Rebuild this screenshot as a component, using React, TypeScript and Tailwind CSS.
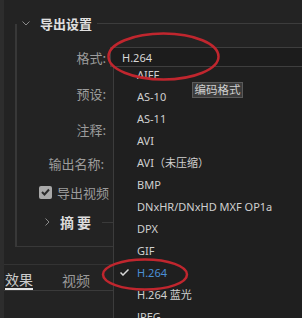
export default function App() {
  const items = [
    "AIFF",
    "AS-10",
    "AS-11",
    "AVI",
    "AVI（未压缩）",
    "BMP",
    "DNxHR/DNxHD MXF OP1a",
    "DPX",
    "GIF",
    "H.264",
    "H.264 蓝光",
    "JPEG",
  ];
  return (
    <div className="relative w-[302px] h-[318px] overflow-hidden bg-[#232323] flex font-['Noto_Sans_CJK_SC',sans-serif]">
      <div className="w-[4px] shrink-0 bg-[#2d2d2d]" />
      <div className="flex-1 flex flex-col min-w-0">
        {/* header */}
        <div className="mt-[17px] h-[12px] flex items-center relative z-[1]">
          <svg className="ml-[18px] w-[8px] h-[5px]" viewBox="0 0 8 5">
            <polyline points="0.5,0.5 4,4 7.5,0.5" fill="none" stroke="#8a8a8a" strokeWidth="1" />
          </svg>
          <span className="ml-[10px] text-[13px] font-bold text-[#e0e0e0] leading-none whitespace-nowrap">导出设置</span>
          <div className="ml-[5px] flex-1 h-px bg-[#3c3c3c]" />
        </div>
        {/* group box */}
        <div className="-mt-[5px] ml-[11px] h-[223px] border-l-2 border-b border-[#383838] flex flex-col text-[13px] text-[#9c9c9c]">
          <div className="mt-[23px] h-[20px] flex items-center">
            <span className="w-[89px] text-right leading-none">格式:</span>
            <div className="ml-[4px] flex-1 h-[20px] -mr-[2px] border border-r-0 border-[#3e3e3e] bg-[#1c1c1c] flex items-center pl-[11px] relative z-20">
              <span className="text-[11px] text-[#d8d8d8] font-['Noto_Sans',sans-serif] leading-none">H.264</span>
            </div>
          </div>
          <div className="mt-[16px] h-[20px] flex items-center">
            <span className="w-[89px] text-right leading-none">预设:</span>
          </div>
          <div className="mt-[16px] h-[20px] flex items-center">
            <span className="w-[89px] text-right leading-none">注释:</span>
          </div>
          <div className="mt-[14px] h-[20px] flex items-center">
            <span className="w-[87px] text-right leading-none whitespace-nowrap">输出名称:</span>
          </div>
          <div className="mt-[11px] h-[16px] flex items-center">
            <div className="ml-[22px] w-[13px] h-[13px] rounded-[2px] bg-[#a9a9a9] flex items-center justify-center">
              <svg className="w-[9px] h-[8px]" viewBox="0 0 9 8">
                <polyline points="1,4 3.5,6.5 8,1.5" fill="none" stroke="#2b2b2b" strokeWidth="2" />
              </svg>
            </div>
            <span className="ml-[5px] leading-none whitespace-nowrap">导出视频</span>
          </div>
          <div className="mt-[14px] h-[16px] flex items-center">
            <svg className="ml-[28px] w-[5px] h-[8px]" viewBox="0 0 5 8">
              <polyline points="0.5,0.5 4,4 0.5,7.5" fill="none" stroke="#8a8a8a" strokeWidth="1" />
            </svg>
            <span className="ml-[10px] font-bold text-[14px] tracking-[3px] text-[#dcdcdc] leading-none whitespace-nowrap">摘要</span>
            <div className="ml-[8px] flex-1 h-px bg-[#3a3a3a]" />
          </div>
        </div>
        {/* tabs */}
        <div className="mt-[17px] h-px bg-[#333333]" />
        <div className="h-[25px] flex text-[14px]">
          <div className="ml-[1px] border-b-2 border-[#e6e6e6] text-[#cccccc] flex items-center pt-[4px] leading-none">效果</div>
          <div className="ml-[29px] text-[#9a9a9a] flex items-center pt-[4px] leading-none">视频</div>
        </div>
        <div className="h-px bg-[#3a3a3a]" />
      </div>

      {/* dropdown list */}
      <div className="absolute left-[113px] top-[63px] w-[200px] h-[270px] bg-[#1f1f1f] border-l border-[#3c3c3c] z-10 font-['Noto_Sans','Noto_Sans_CJK_SC',sans-serif] text-[11px]">
        {items.map((it, i) => (
          <div key={i} className="relative h-[22px] flex items-center pl-[23px] whitespace-nowrap">
            {i === 9 && (
              <svg className="absolute left-[6px] top-[8px] w-[9px] h-[7px]" viewBox="0 0 9 7">
                <polyline points="0.5,3.5 3,6 8.5,0.5" fill="none" stroke="#d8d8d8" strokeWidth="1.5" />
              </svg>
            )}
            <span className={i === 9 ? "text-[#4a8fd6] leading-none" : "text-[#d0d0d0] leading-none"}>{it}</span>
          </div>
        ))}
      </div>

      {/* tooltip */}
      <div className="absolute left-[192px] top-[82px] w-[51px] h-[16px] bg-[#3b3b3b] border border-[#5a5a5a] z-30 flex items-center justify-center text-[11.5px] text-[#cfcfcf] leading-none whitespace-nowrap">
        编码格式
      </div>

      {/* annotations */}
      <svg className="absolute left-0 top-0 w-[302px] h-[318px] z-40 pointer-events-none" viewBox="0 0 302 318">
        <ellipse cx="163.5" cy="56.5" rx="55" ry="23" fill="none" stroke="#c0262e" strokeWidth="2.5" />
        <ellipse cx="145" cy="274.5" rx="42" ry="15" fill="none" stroke="#c0262e" strokeWidth="2.5" />
      </svg>
    </div>
  );
}
